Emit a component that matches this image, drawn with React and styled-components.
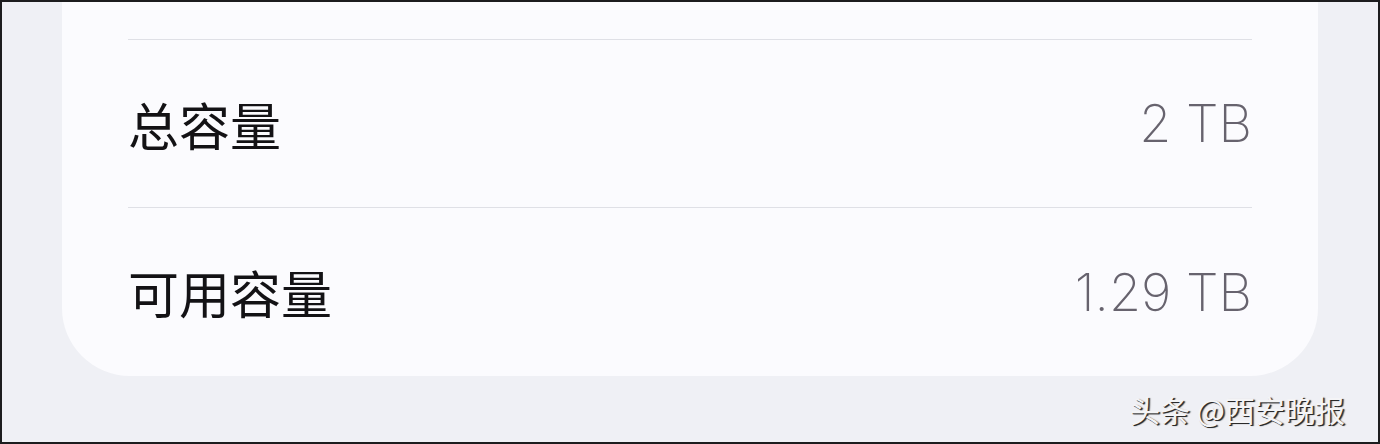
import React from 'react';
import styled, {createGlobalStyle} from 'styled-components';

const GlobalStyle = createGlobalStyle`
  html, body {
    margin: 0;
    padding: 0;
  }
  body {
    font-family: "Noto Sans CJK SC", "Noto Sans", sans-serif;
  }
`;

const Frame = styled.div`
  box-sizing: border-box;
  width: 1380px;
  height: 444px;
  border: 2px solid #1c1c1e;
  background: #eff0f5;
  display: flex;
  flex-direction: column;
  overflow: hidden;
`;

const Card = styled.div`
  margin: 0 60px 0 60px;
  padding: 37px 66px 0 66px;
  background: #fbfbfe;
  border-radius: 0 0 68px 68px;
  display: flex;
  flex-direction: column;
`;

const Row = styled.div`
  display: flex;
  align-items: center;
  justify-content: space-between;
  height: ${p => p.$h}px;
  border-top: 1px solid #dfe0e6;
`;

const Label = styled.span`
  font-family: "Noto Sans CJK SC", sans-serif;
  font-size: 51px;
  font-weight: 400;
  color: #131215;
`;

const Value = styled.span`
  font-family: Inter, "Noto Sans", sans-serif;
  font-size: 52px;
  font-weight: 250;
  color: #67636e;
`;

const Footer = styled.div`
  flex: 1;
  display: flex;
  justify-content: flex-end;
  align-items: center;
  padding: 0 33px 0 0;
`;

const Mark = styled.span`
  font-family: "Noto Sans CJK SC", sans-serif;
  font-size: 30px;
  color: #f4f4f6;
  text-shadow: 1px 1px 0 #2a2a2a, 2px 1px 1px #555;
`;

const rows = [
  {label: '总容量', value: '2 TB', h: 167},
  {label: '可用容量', value: '1.29 TB', h: 168},
];

export default function App() {
  return (
    <>
      <GlobalStyle />
      <Frame>
        <Card>
          {rows.map(r => (
            <Row key={r.label} $h={r.h}>
              <Label>{r.label}</Label>
              <Value>{r.value}</Value>
            </Row>
          ))}
        </Card>
        <Footer>
          <Mark>头条 @西安晚报</Mark>
        </Footer>
      </Frame>
    </>
  );
}
